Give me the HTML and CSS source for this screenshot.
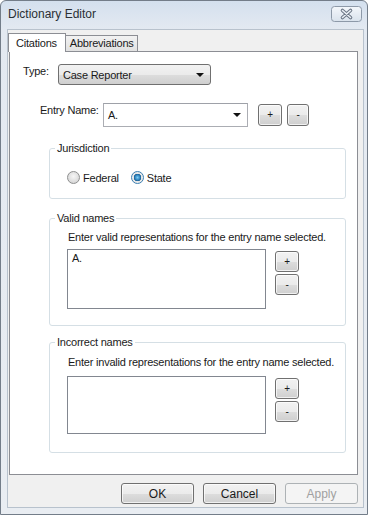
FILE: index.html
```html
<!DOCTYPE html>
<html lang="en">
    <head>
        <meta charset="UTF-8" />
        <title>Dictionary Editor</title>
        <link rel="stylesheet" href="styles.css">
    </head>

    <body>
        <div class="window">
            <div class="titlebar">
                <span class="title">Dictionary Editor</span>
                <span class="close">
                    <svg width="31" height="16" viewBox="0 0 31 16">
                        <defs>
                            <linearGradient id="cg" x1="0" y1="0" x2="0" y2="1">
                                <stop offset="0" stop-color="#f4f7fb" />
                                <stop offset="1" stop-color="#d9e2ec" />
                            </linearGradient>
                        </defs>
                        <rect x="0.5" y="0.5" width="30" height="15" rx="3" fill="url(#cg)" stroke="#8d99a8" />
                        <path d="M11.5 4.5 L19.5 11.5 M19.5 4.5 L11.5 11.5" stroke="#6b7685" stroke-width="3.6" stroke-linecap="round" />
                        <path d="M11.5 4.5 L19.5 11.5 M19.5 4.5 L11.5 11.5" stroke="#e9eef4" stroke-width="1.6" stroke-linecap="round" />
                    </svg>
                </span>
            </div>

            <div class="client">
                <div class="tabs">
                    <div class="tab active">Citations</div>
                    <div class="tab">Abbreviations</div>
                </div>

                <div class="panel">
                    <div class="row typeRow">
                        <label class="typeLabel">Type:</label>
                        <div class="dropdown">
                            <span>Case Reporter</span>
                            <span class="arrow"></span>
                        </div>
                    </div>

                    <div class="row entryRow">
                        <label class="entryLabel">Entry Name:</label>
                        <div class="combo">
                            <span>A.</span>
                            <span class="arrow"></span>
                        </div>
                        <button class="btn small plus">+</button>
                        <button class="btn small minus">-</button>
                    </div>

                    <fieldset class="group jurisdiction">
                        <legend>Jurisdiction</legend>
                        <div class="radios">
                            <span class="radio"></span>
                            <span class="radioText">Federal</span>
                            <span class="radio checked"></span>
                            <span class="radioText">State</span>
                        </div>
                    </fieldset>

                    <fieldset class="group names valid">
                        <legend>Valid names</legend>
                        <p class="hint">Enter valid representations for the entry name selected.</p>
                        <div class="listRow">
                            <div class="listbox">A.</div>
                            <div class="sideBtns">
                                <button class="btn side">+</button>
                                <button class="btn side">-</button>
                            </div>
                        </div>
                    </fieldset>

                    <fieldset class="group names invalid">
                        <legend>Incorrect names</legend>
                        <p class="hint">Enter invalid representations for the entry name selected.</p>
                        <div class="listRow">
                            <div class="listbox"></div>
                            <div class="sideBtns">
                                <button class="btn side">+</button>
                                <button class="btn side">-</button>
                            </div>
                        </div>
                    </fieldset>
                </div>

                <div class="footer">
                    <button class="btn big">OK</button>
                    <button class="btn big">Cancel</button>
                    <button class="btn big disabled">Apply</button>
                </div>
            </div>
        </div>
    </body>
</html>
```

FILE: styles.css
```css
* {
    box-sizing: border-box;
}
body {
    margin: 0;
    background-color: #ffffff;
    font-family: "Liberation Sans", Arial, sans-serif;
    font-size: 11px;
    letter-spacing: -0.22px;
    color: #1a1a1a;
    white-space: nowrap;
}
.window {
    width: 368px;
    height: 515px;
    border: 1px solid #737d89;
    border-radius: 6px 6px 0 0;
    background: linear-gradient(#d4e0ee, #e3e9f1 28px, #e9edf2);
    overflow: hidden;
}
.titlebar {
    height: 28px;
    display: flex;
    align-items: center;
    justify-content: space-between;
    padding: 0 5px 0 7px;
}
.title {
    font-size: 12px;
    letter-spacing: 0;
    color: #2b2f35;
    margin-top: -3px;
}
.close {
    display: flex;
    margin-top: -2px;
}
.client {
    margin-left: 6px;
    width: 357px;
    height: 479px;
    background-color: #f0f0f0;
    border: 1px solid #b8c2cd;
}
.tabs {
    display: flex;
    align-items: flex-end;
    height: 21px;
    padding-top: 3px;
}
.tab {
    height: 16px;
    padding: 0 3px 0 4px;
    border: 1px solid #8c8e94;
    border-bottom: none;
    background: linear-gradient(#f2f2f2, #e1e1e1);
    line-height: 15px;
    margin-left: -1px;
}
.tab.active {
    height: 19px;
    margin-left: 0;
    margin-bottom: -1px;
    padding: 0 8px 0 7px;
    background: #ffffff;
    line-height: 18px;
    position: relative;
    z-index: 1;
}
.tab.active + .tab {
    margin-left: 0;
    border-left: none;
}
.panel {
    margin-left: 1px;
    width: 349px;
    height: 424px;
    background-color: #ffffff;
    border: 1px solid #8c8e94;
}
.row {
    display: flex;
    align-items: flex-start;
}
.typeRow {
    margin-top: 12px;
    padding-left: 13px;
}
.typeLabel {
    width: 35px;
    margin-top: 1px;
}
.dropdown {
    width: 153px;
    height: 21px;
    border: 1px solid #707070;
    border-radius: 3px;
    background: linear-gradient(#f2f2f2 0%, #ebebeb 50%, #dddddd 51%, #cfcfcf 100%);
    display: flex;
    align-items: center;
    justify-content: space-between;
    padding: 0 6px 0 4px;
}
.arrow {
    width: 0;
    height: 0;
    border-left: 4px solid transparent;
    border-right: 4px solid transparent;
    border-top: 4px solid #111111;
}
.entryRow {
    margin-top: 18px;
    padding-left: 30px;
}
.entryLabel {
    width: 63px;
    margin-top: 1px;
}
.combo {
    width: 145px;
    height: 24px;
    border: 1px solid #abadb3;
    border-top-color: #9ea1a8;
    background-color: #ffffff;
    display: flex;
    align-items: center;
    justify-content: space-between;
    padding: 0 6px 0 4px;
}
.btn {
    font-family: "Liberation Sans", Arial, sans-serif;
    font-size: 11px;
    letter-spacing: -0.22px;
    color: #1a1a1a;
    border: 1px solid #707070;
    border-radius: 3px;
    background: linear-gradient(#f2f2f2 0%, #ebebeb 50%, #dddddd 51%, #cfcfcf 100%);
    box-shadow: inset 0 0 0 1px rgba(255, 255, 255, 0.7);
    padding: 0;
    margin: 0;
    line-height: 1;
}
.small {
    height: 22px;
    margin-top: 1px;
    font-size: 10px;
}
.plus {
    width: 24px;
    margin-left: 10px;
}
.minus {
    width: 22px;
    margin-left: 5px;
}
.group {
    margin: 0 0 0 39px;
    padding: 0;
    width: 297px;
    border: 1px solid #d5dfe5;
    border-radius: 3px;
}
.group legend {
    margin-left: 5px;
    padding: 0 2px;
    line-height: 15px;
}
.jurisdiction {
    margin-top: 14px;
    height: 58px;
}
.radios {
    display: flex;
    align-items: center;
    padding: 15px 0 0 17px;
}
.radio {
    width: 13px;
    height: 13px;
    border-radius: 50%;
    border: 1px solid #8e8f8f;
    background: radial-gradient(circle at 50% 40%, #f6f6f6 0%, #dadada 70%, #cfcfcf 100%);
}
.radio.checked {
    border-color: #3c7fb1;
    background: radial-gradient(circle, #7ccdf2 0%, #2f84c0 2.5px, #1b5e91 3.5px, #e6e6e6 4px, #f5f5f5 100%);
}
.radioText {
    margin-left: 3px;
    margin-right: 12px;
}
.valid {
    margin-top: 12px;
    height: 115px;
}
.invalid {
    height: 118px;
    margin-top: 9px;
}
.hint {
    margin: 4px 0 0 18px;
    line-height: 15px;
}
.invalid .hint {
    margin-top: 5px;
}
.listRow {
    display: flex;
    align-items: flex-start;
    margin: 4px 0 0 17px;
}
.invalid .listRow {
    margin-top: 6px;
}
.listbox {
    width: 199px;
    height: 60px;
    border: 1px solid #828790;
    background-color: #ffffff;
    padding: 1px 4px;
    line-height: 15px;
}
.invalid .listbox {
    height: 58px;
}
.sideBtns {
    display: flex;
    flex-direction: column;
    gap: 2px;
    margin: 2px 0 0 9px;
}
.side {
    width: 24px;
    height: 21px;
    font-size: 10px;
}
.footer {
    display: flex;
    justify-content: flex-end;
    gap: 9px;
    margin-top: 8px;
    padding-right: 5px;
}
.big {
    width: 73px;
    height: 21px;
    font-size: 12px;
    letter-spacing: 0;
}
.disabled {
    border-color: #adb2b5;
    background: #f4f4f4;
    color: #a0a0a0;
    box-shadow: none;
}
```
